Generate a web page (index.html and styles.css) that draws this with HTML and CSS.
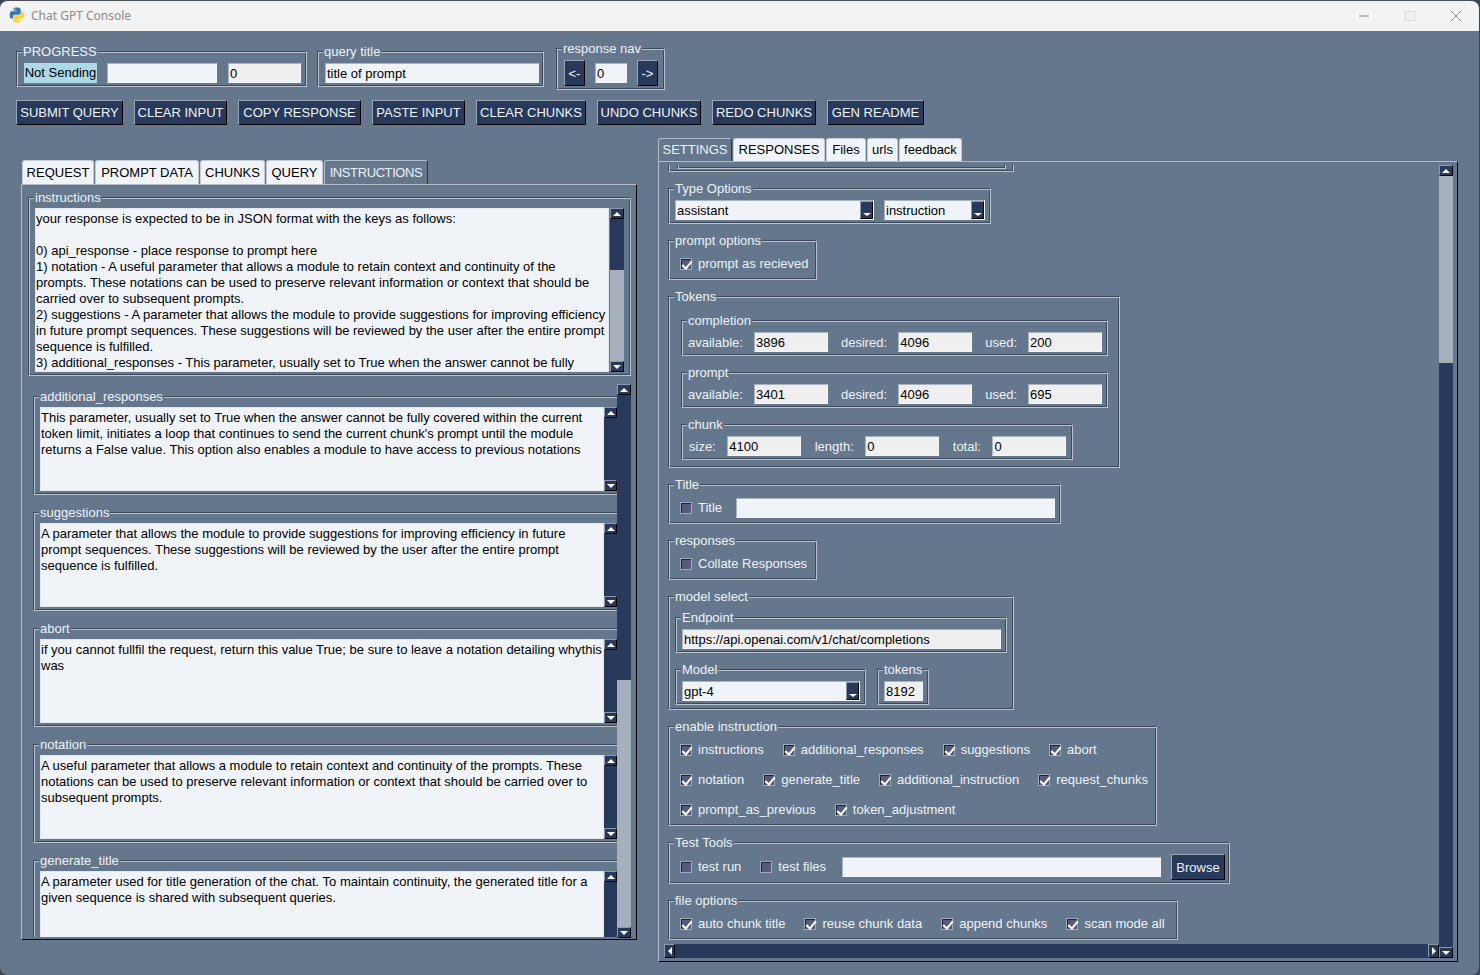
FILE: index.html
```html
<!DOCTYPE html>
<html lang="en">
<head>
    <meta charset="UTF-8">
    <title>Chat GPT Console</title>
    <link rel="stylesheet" href="styles.css">
</head>
<body>
<div class="window">
    <div class="titlebar">
        <svg class="app-icon" width="16" height="16" viewBox="0 0 16 16">
            <path d="M7.9.5C4.2.5 4.5 2.1 4.5 2.1V3.8H8V4.3H3.1S.7 4 .7 7.9 2.8 11.6 2.8 11.6H4V9.8S3.9 7.7 6.1 7.7H9.7S11.7 7.7 11.7 5.7V2.5S12 .5 7.9.5ZM6 1.6A.6.6 0 1 1 6 2.8.6.6 0 1 1 6 1.6Z" fill="#3776ab"/>
            <path d="M8.1 15.5C11.8 15.5 11.5 13.9 11.5 13.9V12.2H8V11.7H12.9S15.3 12 15.3 8.1 13.2 4.4 13.2 4.4H12V6.2S12.1 8.3 9.9 8.3H6.3S4.3 8.3 4.3 10.3V13.5S4 15.5 8.1 15.5ZM10 14.4A.6.6 0 1 1 10 13.2.6.6 0 1 1 10 14.4Z" fill="#ffd43b"/>
        </svg>
        <span class="app-title">Chat GPT Console</span>
        <div class="win-buttons">
            <svg width="46" height="30" viewBox="0 0 46 30"><path d="M18 15H28" stroke="#8a8a8a"/></svg>
            <svg width="46" height="30" viewBox="0 0 46 30"><rect x="18.5" y="10.5" width="9" height="9" fill="none" stroke="#dcdcdc"/></svg>
            <svg width="46" height="30" viewBox="0 0 46 30"><path d="M18 10L28 20M28 10L18 20" stroke="#8a8a8a"/></svg>
        </div>
    </div>

    <div class="main">
        <div class="top-row">
            <fieldset class="group progress-box">
                <legend>PROGRESS</legend>
                <div class="row">
                    <span class="status">Not Sending</span>
                    <input class="field w110" value="">
                    <input class="field grey w73" value="0">
                </div>
            </fieldset>
            <fieldset class="group query-box">
                <legend>query title</legend>
                <input class="field w214" value="title of prompt">
            </fieldset>
            <fieldset class="group nav-box">
                <legend>response nav</legend>
                <div class="row nav-row">
                    <button class="btn nav-btn">&lt;-</button>
                    <input class="field w32" value="0">
                    <button class="btn nav-btn">-&gt;</button>
                </div>
            </fieldset>
        </div>

        <div class="button-row">
            <button class="btn">SUBMIT QUERY</button>
            <button class="btn">CLEAR INPUT</button>
            <button class="btn">COPY RESPONSE</button>
            <button class="btn">PASTE INPUT</button>
            <button class="btn">CLEAR CHUNKS</button>
            <button class="btn">UNDO CHUNKS</button>
            <button class="btn">REDO CHUNKS</button>
            <button class="btn">GEN README</button>
        </div>

        <div class="panes">
            <!-- left notebook -->
            <div class="left-col">
                <div class="tabs">
                    <span class="tab">REQUEST</span>
                    <span class="tab">PROMPT DATA</span>
                    <span class="tab">CHUNKS</span>
                    <span class="tab">QUERY</span>
                    <span class="tab active">INSTRUCTIONS</span>
                </div>
                <div class="pane left-pane">
                    <fieldset class="group instr-box">
                        <legend>instructions</legend>
                        <div class="text-wrap">
                            <div class="textbox tall">your response is expected to be in JSON format with the keys as follows:

0) api_response - place response to prompt here
1) notation - A useful parameter that allows a module to retain context and continuity of the
prompts. These notations can be used to preserve relevant information or context that should be
carried over to subsequent prompts.
2) suggestions - A parameter that allows the module to provide suggestions for improving efficiency
in future prompt sequences. These suggestions will be reviewed by the user after the entire prompt
sequence is fulfilled.
3) additional_responses - This parameter, usually set to True when the answer cannot be fully</div>
                            <div class="sb instr-sb">
                                <span class="sb-btn up"></span>
                                <span class="seg dark s51"></span>
                                <span class="seg light grow"></span>
                                <span class="sb-btn down"></span>
                            </div>
                        </div>
                    </fieldset>

                    <div class="scroll-row">
                        <div class="scroll-clip">
                            <fieldset class="group param">
                                <legend>additional_responses</legend>
                                <div class="text-wrap">
                                    <div class="textbox">This parameter, usually set to True when the answer cannot be fully covered within the current
token limit, initiates a loop that continues to send the current chunk's prompt until the module
returns a False value. This option also enables a module to have access to previous notations</div>
                                    <div class="sb"><span class="sb-btn up"></span><span class="seg dark grow"></span><span class="sb-btn down"></span></div>
                                </div>
                            </fieldset>
                            <fieldset class="group param">
                                <legend>suggestions</legend>
                                <div class="text-wrap">
                                    <div class="textbox">A parameter that allows the module to provide suggestions for improving efficiency in future
prompt sequences. These suggestions will be reviewed by the user after the entire prompt
sequence is fulfilled.</div>
                                    <div class="sb"><span class="sb-btn up"></span><span class="seg dark grow"></span><span class="sb-btn down"></span></div>
                                </div>
                            </fieldset>
                            <fieldset class="group param">
                                <legend>abort</legend>
                                <div class="text-wrap">
                                    <div class="textbox">if you cannot fullfil the request, return this value True; be sure to leave a notation detailing whythis
was</div>
                                    <div class="sb"><span class="sb-btn up"></span><span class="seg dark grow"></span><span class="sb-btn down"></span></div>
                                </div>
                            </fieldset>
                            <fieldset class="group param">
                                <legend>notation</legend>
                                <div class="text-wrap">
                                    <div class="textbox">A useful parameter that allows a module to retain context and continuity of the prompts. These
notations can be used to preserve relevant information or context that should be carried over to
subsequent prompts.</div>
                                    <div class="sb"><span class="sb-btn up"></span><span class="seg dark grow"></span><span class="sb-btn down"></span></div>
                                </div>
                            </fieldset>
                            <fieldset class="group param">
                                <legend>generate_title</legend>
                                <div class="text-wrap">
                                    <div class="textbox">A parameter used for title generation of the chat. To maintain continuity, the generated title for a
given sequence is shared with subsequent queries.</div>
                                    <div class="sb"><span class="sb-btn up"></span><span class="seg dark grow"></span><span class="sb-btn down"></span></div>
                                </div>
                            </fieldset>
                        </div>
                        <div class="sb outer-sb">
                            <span class="sb-btn up"></span>
                            <span class="seg dark s285"></span>
                            <span class="seg light grow"></span>
                            <span class="sb-btn down"></span>
                        </div>
                    </div>
                </div>
            </div>

            <!-- right notebook -->
            <div class="right-col">
                <div class="tabs">
                    <span class="tab active">SETTINGS</span>
                    <span class="tab">RESPONSES</span>
                    <span class="tab">Files</span>
                    <span class="tab">urls</span>
                    <span class="tab">feedback</span>
                </div>
                <div class="pane right-pane">
                    <div class="canvas">
                        <div class="settings">
                            <div class="stub"><div class="stub-inner"></div></div>

                            <fieldset class="group tight w323">
                                <legend>Type Options</legend>
                                <div class="row gap10">
                                    <div class="combo w199"><span>assistant</span><span class="combo-btn"></span></div>
                                    <div class="combo w101"><span>instruction</span><span class="combo-btn"></span></div>
                                </div>
                            </fieldset>

                            <fieldset class="group checks w149">
                                <legend>prompt options</legend>
                                <div class="check-row">
                                    <label class="check-item"><span class="check on"></span>prompt as recieved</label>
                                </div>
                            </fieldset>

                            <fieldset class="group tokens w452">
                                <legend>Tokens</legend>
                                <fieldset class="group tight w427">
                                    <legend>completion</legend>
                                    <div class="row tok-row">
                                        <span class="tok-label">available:</span><input class="field grey w74" value="3896">
                                        <span class="tok-label">desired:</span><input class="field grey w74" value="4096">
                                        <span class="tok-label">used:</span><input class="field grey w74" value="200">
                                    </div>
                                </fieldset>
                                <fieldset class="group tight w427">
                                    <legend>prompt</legend>
                                    <div class="row tok-row">
                                        <span class="tok-label">available:</span><input class="field grey w74" value="3401">
                                        <span class="tok-label">desired:</span><input class="field grey w74" value="4096">
                                        <span class="tok-label">used:</span><input class="field grey w74" value="695">
                                    </div>
                                </fieldset>
                                <fieldset class="group tight w392">
                                    <legend>chunk</legend>
                                    <div class="row chunk-row">
                                        <span class="tok-label">size:</span><input class="field grey w74" value="4100">
                                        <span class="tok-label">length:</span><input class="field grey w74" value="0">
                                        <span class="tok-label">total:</span><input class="field grey w74" value="0">
                                    </div>
                                </fieldset>
                            </fieldset>

                            <fieldset class="group title-box w393">
                                <legend>Title</legend>
                                <div class="row">
                                    <label class="check-item"><span class="check"></span>Title</label>
                                    <input class="field title-field" value="">
                                </div>
                            </fieldset>

                            <fieldset class="group checks w149">
                                <legend>responses</legend>
                                <div class="check-row">
                                    <label class="check-item"><span class="check"></span>Collate Responses</label>
                                </div>
                            </fieldset>

                            <fieldset class="group model-box w346">
                                <legend>model select</legend>
                                <fieldset class="group tight w332">
                                    <legend>Endpoint</legend>
                                    <input class="field grey w319" value="https://api.openai.com/v1/chat/completions">
                                </fieldset>
                                <div class="row gap11">
                                    <fieldset class="group tight w191">
                                        <legend>Model</legend>
                                        <div class="combo w178"><span>gpt-4</span><span class="combo-btn"></span></div>
                                    </fieldset>
                                    <fieldset class="group tight w52">
                                        <legend>tokens</legend>
                                        <input class="field grey w39" value="8192">
                                    </fieldset>
                                </div>
                            </fieldset>

                            <fieldset class="group checks w489">
                                <legend>enable instruction</legend>
                                <div class="check-row">
                                    <label class="check-item"><span class="check on"></span>instructions</label>
                                    <label class="check-item"><span class="check on"></span>additional_responses</label>
                                    <label class="check-item"><span class="check on"></span>suggestions</label>
                                    <label class="check-item"><span class="check on"></span>abort</label>
                                </div>
                                <div class="check-row next">
                                    <label class="check-item"><span class="check on"></span>notation</label>
                                    <label class="check-item"><span class="check on"></span>generate_title</label>
                                    <label class="check-item"><span class="check on"></span>additional_instruction</label>
                                    <label class="check-item"><span class="check on"></span>request_chunks</label>
                                </div>
                                <div class="check-row next">
                                    <label class="check-item"><span class="check on"></span>prompt_as_previous</label>
                                    <label class="check-item"><span class="check on"></span>token_adjustment</label>
                                </div>
                            </fieldset>

                            <fieldset class="group tools-box w562">
                                <legend>Test Tools</legend>
                                <div class="row tools-row">
                                    <label class="check-item"><span class="check"></span>test run</label>
                                    <label class="check-item"><span class="check"></span>test files</label>
                                    <input class="field w319" value="">
                                    <button class="btn browse">Browse</button>
                                </div>
                            </fieldset>

                            <fieldset class="group checks w510">
                                <legend>file options</legend>
                                <div class="check-row">
                                    <label class="check-item"><span class="check on"></span>auto chunk title</label>
                                    <label class="check-item"><span class="check on"></span>reuse chunk data</label>
                                    <label class="check-item"><span class="check on"></span>append chunks</label>
                                    <label class="check-item"><span class="check on"></span>scan mode all</label>
                                </div>
                            </fieldset>
                        </div>
                        <div class="sb right-sb">
                            <span class="sb-btn up"></span>
                            <span class="seg light s187"></span>
                            <span class="seg dark grow"></span>
                            <span class="sb-btn down"></span>
                        </div>
                        <div class="hsb">
                            <span class="sb-btn left"></span>
                            <span class="seg dark grow"></span>
                            <span class="sb-btn right"></span>
                        </div>
                    </div>
                </div>
            </div>
        </div>
    </div>
</div>
</body>
</html>
```

FILE: styles.css
```css
* {
    box-sizing: border-box;
}

html, body {
    margin: 0;
    padding: 0;
    background-color: #3b4656;
}

body {
    font-family: "Liberation Sans", Arial, sans-serif;
    font-size: 13px;
    color: #eef2f7;
}

.window {
    width: 1479px;
    height: 975px;
    background-color: #64778d;
    border-radius: 8px;
    overflow: hidden;
    border-top: 1px solid #4a4f58;
}

/* title bar */
.titlebar {
    height: 30px;
    background-color: #f3f3f3;
    display: flex;
    align-items: center;
    padding-left: 9px;
}

.app-icon {
    margin: 0 6px 2px 0;
}

.app-title {
    font-family: "Noto Sans", sans-serif;
    font-size: 12px;
    color: #8c8c8c;
    padding-bottom: 2px;
}

.win-buttons {
    margin-left: auto;
    display: flex;
}

.win-buttons svg {
    display: block;
}

.main {
    padding: 9px 0 0 16px;
}

/* group boxes: etched frame, dark line then light line */
.group {
    margin: 0;
    min-width: 0;
    border: 1px solid #3e4a5a;
    border-right-color: #b9c2cd;
    border-bottom-color: #b9c2cd;
    box-shadow: inset 1px 1px 0 #b9c2cd, inset -1px -1px 0 #3e4a5a;
    padding: 4px 5px 3px 6px;
}

.group legend {
    padding: 0 1px;
    margin: 0 0 -1px -1px;
    font-size: 13px;
    line-height: 17px;
    color: #eef2f7;
    background-color: #64778d;
}

.row {
    display: flex;
    align-items: center;
}

.gap10 {
    gap: 10px;
}

.gap11 {
    gap: 11px;
    margin-top: 8px;
}

/* top controls */
.top-row {
    display: flex;
    align-items: flex-start;
}

.progress-box {
    width: 291px;
    margin-top: 3px;
    padding-left: 7px;
}

.progress-box .row {
    gap: 10px;
}

.progress-box .grey {
    margin-left: 1px;
}

.status {
    width: 73px;
    height: 20px;
    line-height: 20px;
    background-color: #add8e6;
    color: #000;
    text-align: center;
    white-space: nowrap;
}

.query-box {
    width: 227px;
    margin: 3px 0 0 10px;
    padding-left: 7px;
}

.nav-box {
    width: 109px;
    margin-left: 12px;
    padding-left: 7px;
}

.top-row legend {
    margin-left: -2px;
}

.nav-row {
    gap: 10px;
}

.nav-btn {
    width: 21px;
    height: 26px;
    padding: 0;
    font-size: 12px;
    white-space: nowrap;
}

.field {
    display: block;
    height: 20px;
    padding: 0 1px;
    font-family: "Liberation Sans", Arial, sans-serif;
    font-size: 13px;
    color: #000;
    background-color: #f0f4f9;
    border: 1px solid #f4f6f9;
    border-top-color: #a9b3c0;
    border-left-color: #a9b3c0;
    border-radius: 0;
    outline: none;
}

.field.grey {
    background-color: #efefef;
}

.w32 { width: 32px; }
.w39 { width: 39px; }
.w73 { width: 73px; }
.w74 { width: 74px; }
.w110 { width: 110px; }
.w214 { width: 214px; }
.w319 { width: 319px; }

/* buttons */
.btn {
    height: 26px;
    padding: 0;
    font-family: "Liberation Sans", Arial, sans-serif;
    font-size: 13px;
    color: #eef2f7;
    background-color: #283a5b;
    border: 1px solid #000;
    border-top-color: #9aa6b5;
    border-left-color: #9aa6b5;
}

.button-row {
    display: grid;
    grid-template-columns: 107px 93px 123px 93px 110px 104px 104px 97px;
    gap: 11px;
    margin-top: 10px;
}

.button-row .btn {
    height: 25px;
    white-space: nowrap;
}

/* notebooks */
.panes {
    display: flex;
    align-items: flex-start;
    margin: 13px 0 0 5px;
}

.left-col {
    width: 616px;
    padding-top: 22px;
}

.right-col {
    width: 800px;
    margin-left: 21px;
}

.tabs {
    display: grid;
    gap: 1px;
    padding-left: 1px;
    height: 24px;
    align-items: end;
    grid-template-columns: 72px 104px 65px 57px 104px;
    justify-content: start;
}

.right-col .tabs {
    height: 23px;
    padding-left: 0;
    grid-template-columns: 74px 92px 40px 31px 63px;
}

.tab {
    height: 23px;
    line-height: 22px;
    font-size: 13px;
    text-align: center;
    white-space: nowrap;
    color: #000;
    background-color: #f0f4f9;
    border-radius: 3px 3px 0 0;
    border: 1px solid #c3ccd6;
    border-bottom: none;
}

.left-col .tab {
    height: 24px;
    line-height: 23px;
}

.tab.active {
    color: #eef2f7;
    background-color: #64778d;
    border-color: #b2bcc8;
    border-right-color: #2c3440;
}

.left-col .tab.active {
    letter-spacing: -0.4px;
}

.pane {
    border: 1px solid #000;
    border-top-color: #b2bcc8;
    border-left-color: #b2bcc8;
}

.left-pane {
    height: 756px;
    padding: 4px 5px 0 6px;
}

.right-pane {
    height: 801px;
    padding: 3px 5px 4px 5px;
}

/* text areas */
.text-wrap {
    display: flex;
}

.textbox {
    flex: 1;
    height: 84px;
    padding: 2px 0 0 0;
    line-height: 16px;
    color: #000;
    background-color: #f0f4f9;
    border: 1px solid #e3e8ee;
    white-space: pre;
    overflow: hidden;
}

.textbox.tall {
    height: 164px;
}

.instr-box {
    width: 603px;
    padding: 3px 6px 3px 6px;
}

/* scroll bars */
.sb {
    width: 13px;
    display: flex;
    flex-direction: column;
    background-color: #283a5b;
}

.instr-sb {
    width: 14px;
    margin-left: 1px;
}

.outer-sb {
    width: 14px;
    margin-top: 8px;
    height: 554px;
}

.seg {
    display: block;
}

.seg.dark {
    background-color: #283a5b;
}

.seg.light {
    background-color: #a5b0bc;
}

.grow { flex: 1; }
.s51 { height: 51px; }
.s187 { height: 187px; }
.s285 { height: 285px; }

.sb-btn {
    position: relative;
    display: block;
    flex: none;
    width: 100%;
    height: 11px;
    background-color: #283a5b;
    border: 1px solid #000;
    border-top-color: #8d99a9;
    border-left-color: #8d99a9;
}

.sb-btn::after {
    content: "";
    position: absolute;
    left: 50%;
    top: 50%;
    width: 0;
    height: 0;
    margin: -2px 0 0 -4px;
    border: 4px solid transparent;
    border-top-width: 0;
    border-bottom-color: #fff;
}

.sb-btn.down::after {
    border-width: 4px 4px 0;
    border-color: #fff transparent transparent;
}

.sb-btn.left,
.sb-btn.right {
    width: 11px;
    height: 100%;
}

.sb-btn.left::after {
    margin: -4px 0 0 -2px;
    border-width: 4px 4px 4px 0;
    border-color: transparent #fff transparent transparent;
}

.sb-btn.right::after {
    margin: -4px 0 0 -2px;
    border-width: 4px 0 4px 4px;
    border-color: transparent transparent transparent #fff;
}

/* left scrolled area */
.scroll-row {
    display: flex;
    align-items: flex-start;
}

.scroll-clip {
    width: 589px;
    height: 561px;
    padding: 12px 0 0 5px;
    overflow: hidden;
}

.param {
    width: 590px;
    padding: 3px 0 3px 6px;
    margin-bottom: 9px;
}

.param .text-wrap {
    width: 577px;
}

/* settings page */
.canvas {
    height: 793px;
    display: grid;
    grid-template-columns: 775px 14px;
    grid-template-rows: 779px 14px;
    border-right: 1px solid #fff;
    border-bottom: 1px solid #fff;
}

.settings {
    padding: 0 0 0 4px;
    overflow: hidden;
}

.settings > .group {
    margin-bottom: 8px;
}

.right-sb {
    width: 14px;
    grid-row: 1 / 3;
    grid-column: 2;
}

.hsb {
    display: flex;
    height: 14px;
    background-color: #283a5b;
    grid-row: 2;
    grid-column: 1;
}

.hsb .seg {
    height: 100%;
}

.stub {
    width: 346px;
    height: 7px;
    margin-bottom: 8px;
    padding: 0 7px 0 8px;
    border: 1px solid #b9c2cd;
    border-left-color: #3e4a5a;
    border-top: none;
    box-shadow: inset 1px 0 0 #b9c2cd, inset -1px -1px 0 #3e4a5a;
}

.stub-inner {
    height: 4px;
    border: 1px solid #b9c2cd;
    border-left-color: #3e4a5a;
    border-top: none;
    box-shadow: inset 1px 0 0 #b9c2cd, inset -1px -1px 0 #3e4a5a;
}

.w52 { width: 52px; }
.w149 { width: 149px; }
.w191 { width: 191px; }
.w323 { width: 323px; }
.w332 { width: 332px; }
.w346 { width: 346px; }
.w392 { width: 392px; }
.w393 { width: 393px; }
.w427 { width: 427px; }
.w452 { width: 452px; }
.w489 { width: 489px; }
.w510 { width: 510px; }
.w562 { width: 562px; }

.combo {
    display: flex;
    align-items: center;
    justify-content: space-between;
    height: 20px;
    padding: 0 0 0 1px;
    color: #000;
    background-color: #f0f4f9;
    border: 1px solid #f4f6f9;
    border-top-color: #a9b3c0;
    border-left-color: #a9b3c0;
}

.w101 { width: 101px; }
.w178 { width: 178px; }
.w199 { width: 199px; }

.combo-btn {
    position: relative;
    width: 13px;
    height: 18px;
    background-color: #283a5b;
    border: 1px solid #000;
    border-top-color: #8d99a9;
    border-left-color: #8d99a9;
}

.combo-btn::after {
    content: "";
    position: absolute;
    left: 2px;
    bottom: 2px;
    border-style: solid;
    border-width: 3px 4px 0;
    border-color: #fff transparent transparent;
}

.tokens {
    padding: 8px 0 7px 12px;
}

.tokens > legend {
    margin-left: -7px;
}

.tokens .group + .group {
    margin-top: 8px;
}

.tok-row {
    gap: 12px;
    margin-left: -1px;
}

.chunk-row {
    gap: 12.5px;
}

.tok-label {
    margin-left: 1px;
    margin-right: -1px;
}

.title-box {
    padding: 6px 0 5px 11px;
}

.title-field {
    width: 319px;
    margin-left: 14px;
}

.checks {
    padding: 8px 0 7px 11px;
}

.checks > legend,
.title-box > legend,
.tools-box > legend {
    margin-left: -6px;
}

.check-row {
    display: flex;
    gap: 19px;
    height: 16px;
    align-items: center;
}

.check-row.next {
    margin-top: 14px;
}

.check-item {
    display: flex;
    align-items: center;
    line-height: 16px;
    white-space: nowrap;
}

.check {
    position: relative;
    display: block;
    width: 12px;
    height: 12px;
    margin-right: 6px;
    background-color: #565a7c;
    border: 1px solid #a0abb9;
    box-shadow: inset 1px 1px 0 #20232f;
}

.check.on::after {
    content: "";
    position: absolute;
    left: 3px;
    top: 0;
    width: 4px;
    height: 8px;
    border: solid #fff;
    border-width: 0 2px 2px 0;
    transform: rotate(40deg);
}

.model-box {
    padding: 5px 6px 4px 6px;
}

.tools-box {
    padding: 4px 0 3px 11px;
}

.tools-row {
    gap: 19px;
}

.tools-row .field {
    margin-left: -3px;
}

.browse {
    width: 54px;
    margin-left: -9px;
}
```
